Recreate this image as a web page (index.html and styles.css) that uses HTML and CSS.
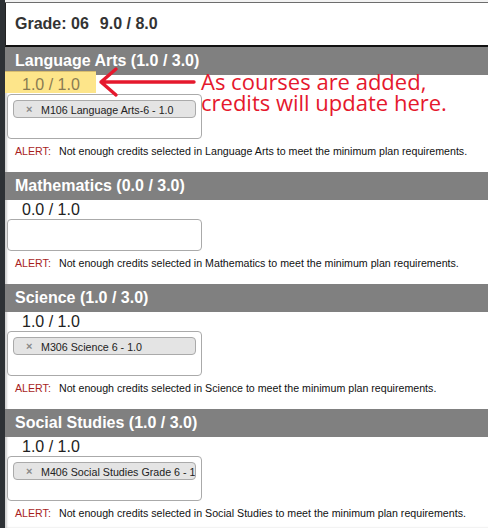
FILE: index.html
```html
<!DOCTYPE html>
<html>
<head>
<meta charset="utf-8">
<link rel="stylesheet" href="styles.css">
</head>
<body>
<div class="page">
  <div class="topstrip"></div>
  <div class="grade">Grade: 06<span class="grade-total">9.0 / 8.0</span></div>

  <section class="subject">
    <div class="subject-head">Language Arts (1.0 / 3.0)</div>
    <div class="credits highlighted"><span class="credit-text">1.0 / 1.0</span></div>
    <div class="select has-chip">
      <div class="chip"><span class="chip-x">×</span><span class="chip-label">M106 Language Arts-6 - 1.0</span></div>
    </div>
    <div class="alert"><span class="alert-tag">ALERT:</span>Not enough credits selected in Language Arts to meet the minimum plan requirements.</div>
    <svg class="arrow" width="106" height="36" viewBox="0 0 106 36">
      <path d="M6 18 L99 18 M21 5 L6 18 L21 31" fill="none" stroke="#e5182d" stroke-width="3.4" stroke-linecap="round" stroke-linejoin="round"/>
    </svg>
    <div class="note">As courses are added,<br>credits will update here.</div>
  </section>

  <section class="subject">
    <div class="subject-head">Mathematics (0.0 / 3.0)</div>
    <div class="credits"><span class="credit-text">0.0 / 1.0</span></div>
    <div class="select"></div>
    <div class="alert"><span class="alert-tag">ALERT:</span>Not enough credits selected in Mathematics to meet the minimum plan requirements.</div>
  </section>

  <section class="subject">
    <div class="subject-head">Science (1.0 / 3.0)</div>
    <div class="credits"><span class="credit-text">1.0 / 1.0</span></div>
    <div class="select has-chip">
      <div class="chip"><span class="chip-x">×</span><span class="chip-label">M306 Science 6 - 1.0</span></div>
    </div>
    <div class="alert"><span class="alert-tag">ALERT:</span>Not enough credits selected in Science to meet the minimum plan requirements.</div>
  </section>

  <section class="subject">
    <div class="subject-head">Social Studies (1.0 / 3.0)</div>
    <div class="credits"><span class="credit-text">1.0 / 1.0</span></div>
    <div class="select has-chip">
      <div class="chip"><span class="chip-x">×</span><span class="chip-label">M406 Social Studies Grade 6 - 1.0</span></div>
    </div>
    <div class="alert"><span class="alert-tag">ALERT:</span>Not enough credits selected in Social Studies to meet the minimum plan requirements.</div>
  </section>
</div>
</body>
</html>
```

FILE: styles.css
```css
html, body {
  margin: 0;
  padding: 0;
}
body {
  background: #2d3135;
  font-family: "Liberation Sans", Arial, sans-serif;
  color: #222;
  overflow: hidden;
}
.page {
  margin-left: 5px;
  min-height: 528px;
  background: #fff;
  box-shadow: inset 2px 0 2px rgba(0, 0, 0, 0.18);
  position: relative;
}
.topstrip {
  height: 2px;
  background: #f2f2f2;
  border-bottom: 1px solid #6d6d6d;
}
.grade {
  height: 42px;
  line-height: 42px;
  padding-left: 9px;
  border-left: 1px solid #222;
  border-bottom: 2px solid #111;
  font-size: 16px;
  font-weight: bold;
  color: #333;
  background: #fff;
  white-space: nowrap;
}
.grade-total {
  margin-left: 11px;
}
.subject {
  position: relative;
}
.subject-head {
  height: 28px;
  line-height: 28px;
  padding-left: 10px;
  background: #808080;
  color: #fff;
  font-size: 16px;
  font-weight: bold;
  white-space: nowrap;
}
.credits {
  position: relative;
  height: 19px;
  line-height: 19px;
  padding-left: 17px;
  font-size: 16px;
  color: #222;
}
.credit-text {
  position: relative;
}
.credits.highlighted::before {
  content: "";
  position: absolute;
  left: 0;
  top: -4px;
  width: 91px;
  height: 22px;
  background: #fde58a;
  border-top: 1px solid #d8bd6e;
  box-sizing: border-box;
}
.credits.highlighted .credit-text {
  color: #8a7b52;
}
.select {
  margin-left: 2px;
  width: 195px;
  min-height: 32px;
  box-sizing: border-box;
  border: 1px solid #aaa;
  border-radius: 4px;
  background: #fff;
}
.select.has-chip {
  padding: 5px 5px 20px;
}
.chip {
  display: flex;
  align-items: center;
  height: 18px;
  box-sizing: border-box;
  border: 1px solid #aaa;
  border-radius: 4px;
  background: #e4e4e4;
  overflow: hidden;
  white-space: nowrap;
  font-size: 10.7px;
  color: #222;
}
.chip-x {
  margin-left: 12px;
  width: 15px;
  flex: none;
  color: #888;
  font-weight: bold;
  font-size: 11px;
}
.chip-label {
  flex: none;
  padding-top: 1px;
}
.alert {
  margin: 6px 0 14px;
  padding-left: 10px;
  height: 13px;
  line-height: 13px;
  font-size: 10.65px;
  color: #111;
  white-space: nowrap;
}
.alert-tag {
  display: inline-block;
  width: 44px;
  color: #a81e1e;
}
.arrow {
  position: absolute;
  left: 90px;
  top: 17px;
}
.note {
  position: absolute;
  left: 196px;
  top: 24px;
  font-family: "Open Sans", "Liberation Sans", sans-serif;
  font-size: 22px;
  line-height: 21px;
  color: #e5182d;
  white-space: nowrap;
}
```
